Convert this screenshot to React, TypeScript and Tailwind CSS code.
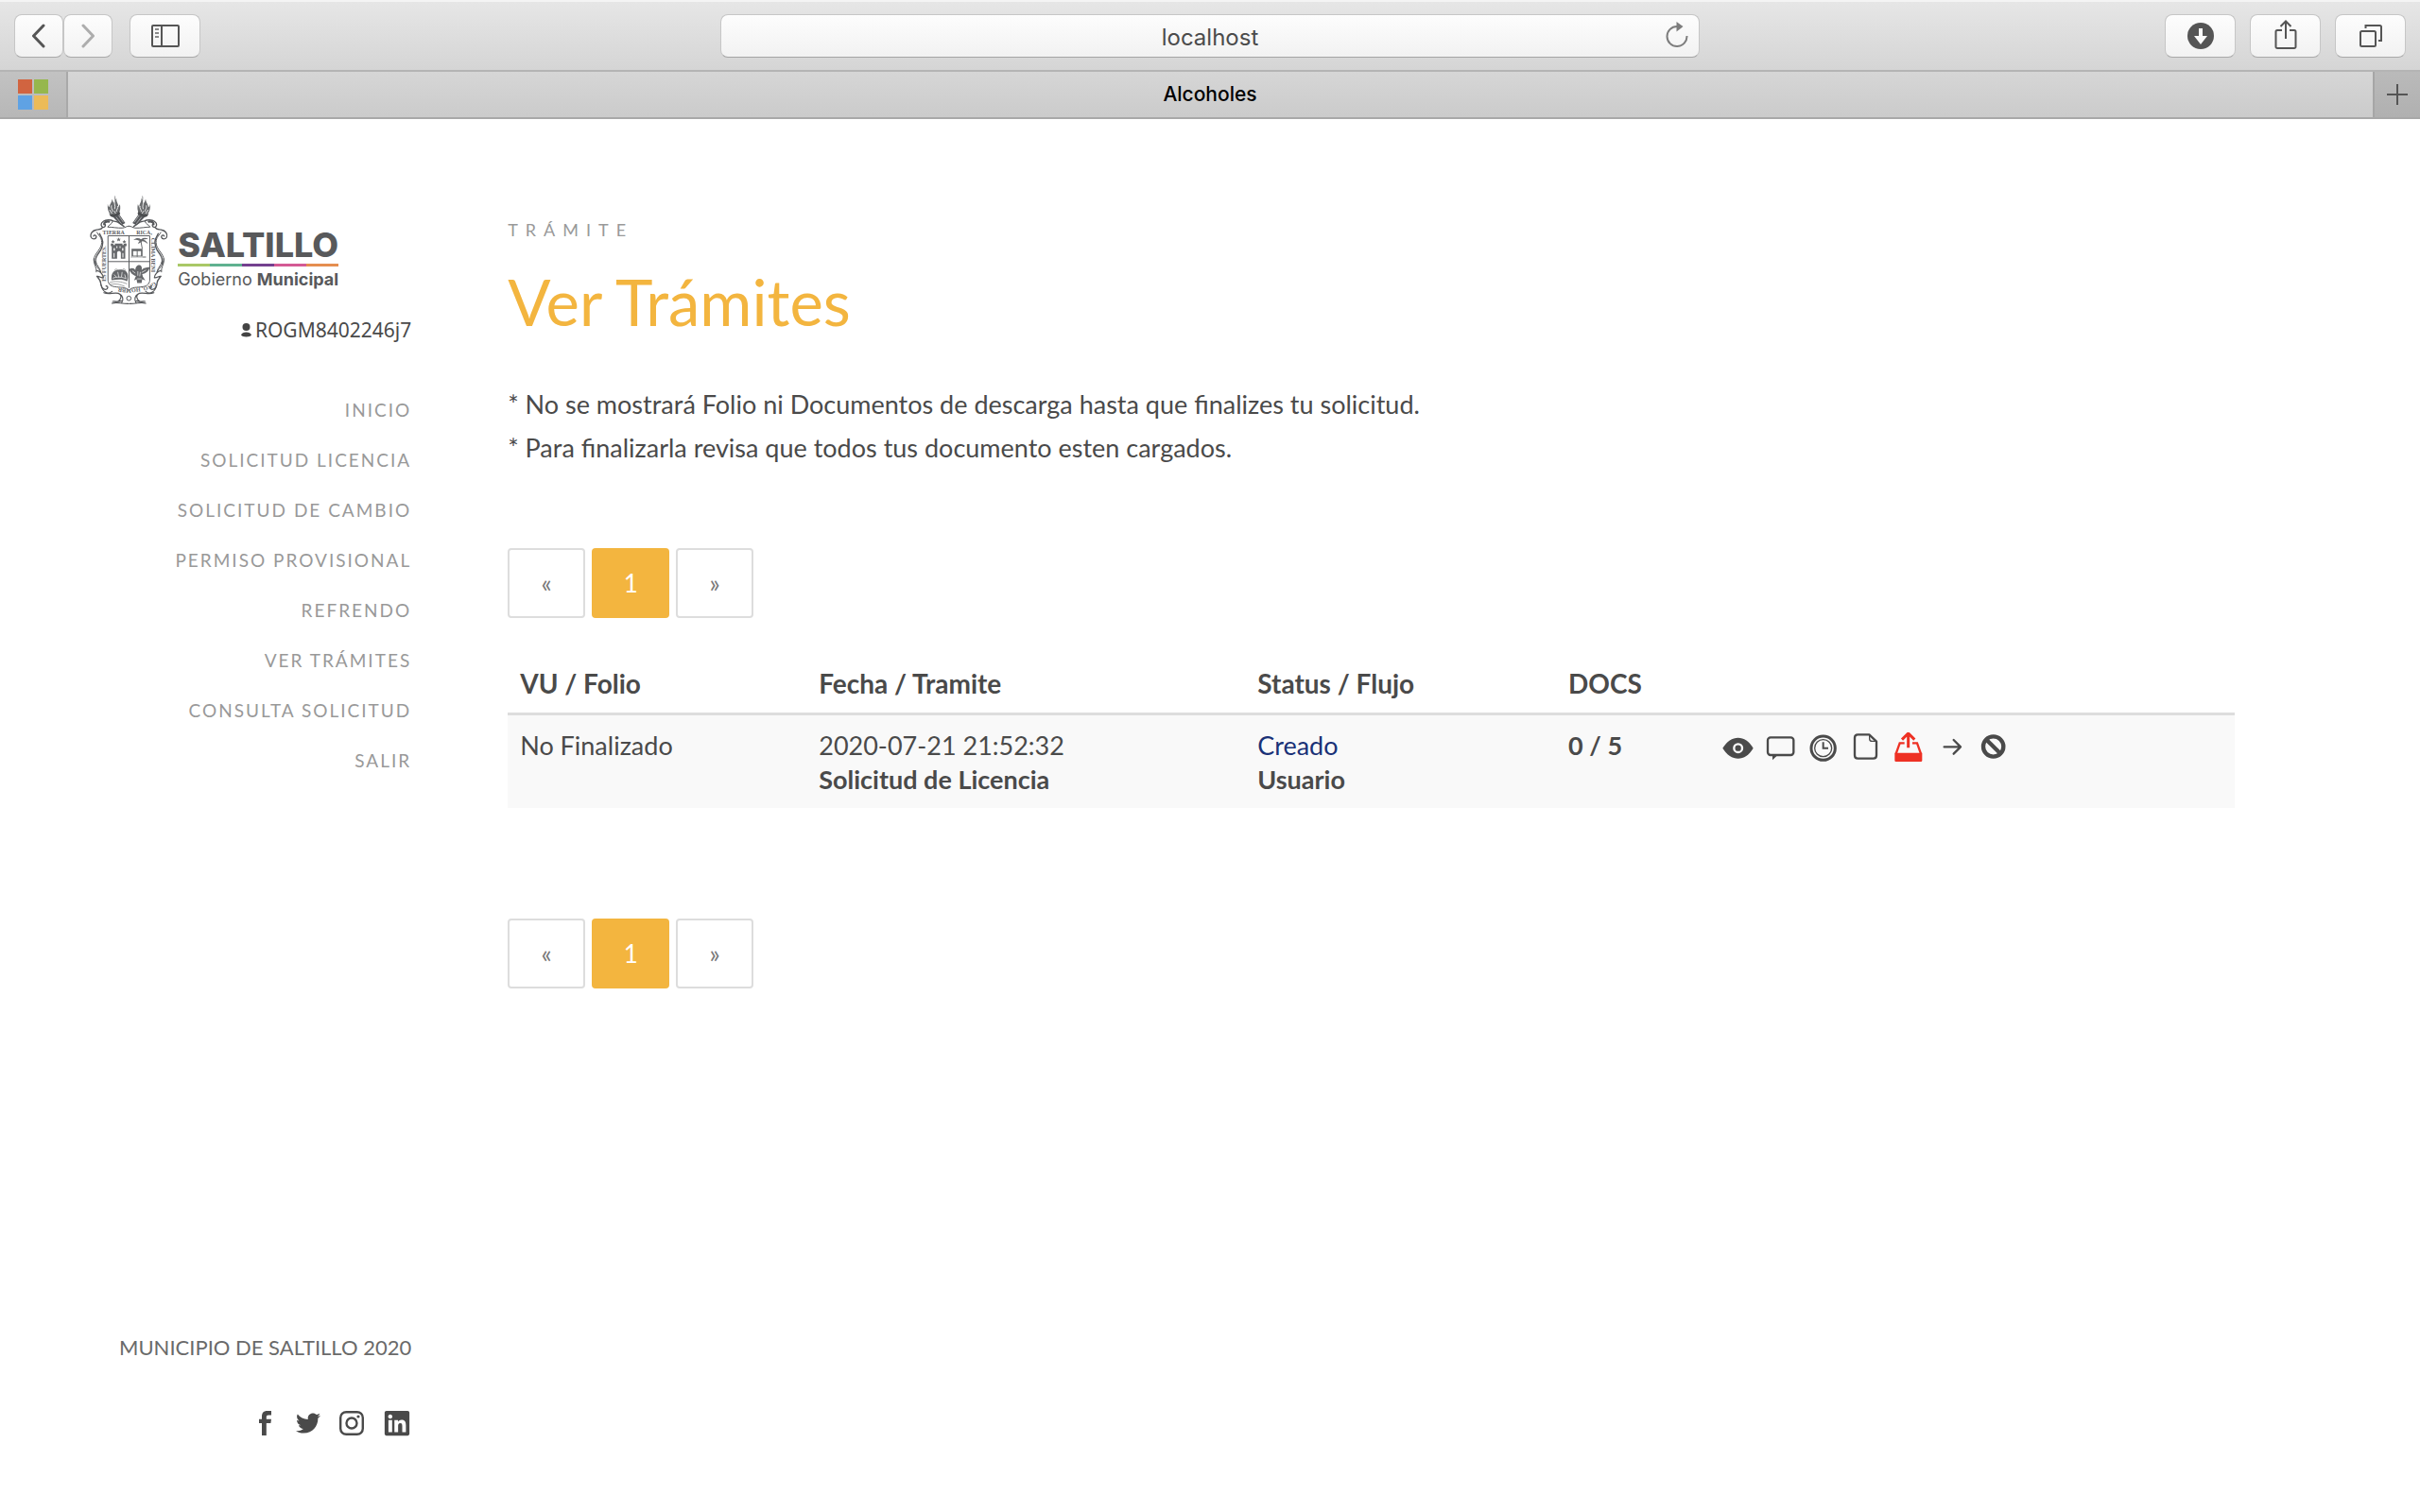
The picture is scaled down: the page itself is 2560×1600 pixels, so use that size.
import React from "react";
import { FaTwitter, FaLinkedin } from "react-icons/fa";

const NAV = [
  "INICIO",
  "SOLICITUD LICENCIA",
  "SOLICITUD DE CAMBIO",
  "PERMISO PROVISIONAL",
  "REFRENDO",
  "VER TRÁMITES",
  "CONSULTA SOLICITUD",
  "SALIR",
];

function ToolButton({ label, wide, children }: { label: string; wide?: boolean; children: React.ReactNode }) {
  return (
    <button
      type="button"
      aria-label={label}
      className={
        "flex h-[46px] items-center justify-center rounded-lg border border-[#c6c6c6] border-b-[#a9a9a9] bg-linear-to-b from-[#fdfdfd] to-[#f2f2f2] text-[#555] " +
        (wide ? "w-[75px]" : "w-[52px]")
      }
    >
      {children}
    </button>
  );
}

function BrowserChrome() {
  return (
    <header>
      <div className="flex h-[76px] items-center border-t-2 border-b-2 border-t-[#f4f4f4] border-b-[#b4b4b4] bg-linear-to-b from-[#e6e6e6] to-[#d5d5d5] px-[15px]">
        <div className="flex flex-1 items-center">
          <ToolButton label="Atrás">
            <svg width="16" height="26" viewBox="0 0 16 26" fill="none" stroke="#555" strokeWidth="3" strokeLinecap="round" strokeLinejoin="round">
              <path d="M13 2 2.500 13 13 24" />
            </svg>
          </ToolButton>
          <ToolButton label="Adelante">
            <svg width="16" height="26" viewBox="0 0 16 26" fill="none" stroke="#adadad" strokeWidth="3" strokeLinecap="round" strokeLinejoin="round">
              <path d="M3 2 13.500 13 3 24" />
            </svg>
          </ToolButton>
          <div className="ml-[18px]">
            <ToolButton label="Mostrar barra lateral" wide>
              <svg width="30" height="24" viewBox="0 0 30 24" fill="none" stroke="#555" strokeWidth="2">
                <rect x="1" y="1" width="28" height="22" rx="1" />
                <path d="M11 1v22" />
                <path d="M4 5h4M4 9h4M4 13h4" stroke="#8a8a8a" />
              </svg>
            </ToolButton>
          </div>
        </div>
        <div className="relative flex w-[1036px]">
          <input
            aria-label="Dirección"
            defaultValue="localhost"
            className="h-[46px] w-full rounded-lg border border-[#c6c6c6] border-b-[#a4a4a4] bg-linear-to-b from-[#fdfdfd] to-[#f2f2f2] pt-0.5 text-center font-[Inter,sans-serif] text-[24px] text-[#4b4b4b]"
          />
          <button type="button" aria-label="Recargar" className="absolute top-2 right-2.5">
            <svg width="28" height="28" viewBox="0 0 28 28" fill="none" stroke="#7d7d7d" strokeWidth="2">
              <path d="M14 5A10.500 10.500 0 1 0 24.500 15" />
              <path d="M13.500 0 20.500 5 13.500 10.500z" fill="#7d7d7d" stroke="none" />
            </svg>
          </button>
        </div>
        <div className="flex flex-1 items-center justify-end gap-[15px]">
          <ToolButton label="Descargas" wide>
            <svg width="28" height="28" viewBox="0 0 28 28">
              <circle cx="14" cy="14" r="14" fill="#555" />
              <path d="M12 6h4v8h5l-7 9-7-9h5z" fill="#fafafa" />
            </svg>
          </ToolButton>
          <ToolButton label="Compartir" wide>
            <svg width="24" height="32" viewBox="0 0 24 32" fill="none" stroke="#555" strokeWidth="2" className="mb-1">
              <path d="M8 12H3a1.500 1.500 0 0 0-1.500 1.500v16A1.500 1.500 0 0 0 3 31h18a1.500 1.500 0 0 0 1.500-1.500v-16A1.500 1.500 0 0 0 21 12h-5M12 21V3M6.500 8 12 2.500 17.500 8" />
            </svg>
          </ToolButton>
          <ToolButton label="Mostrar todas las pestañas" wide>
            <svg width="26" height="26" viewBox="0 0 26 26" fill="none" stroke="#555" strokeWidth="2">
              <rect x="2" y="8" width="16" height="16" rx="1.500" />
              <path d="M7.500 5V2h15a1.500 1.500 0 0 1 1.500 1.500V18h-3" />
            </svg>
          </ToolButton>
        </div>
      </div>
      <div className="flex h-[50px] border-b-2 border-[#a8a8a8] font-[Inter,sans-serif]">
        <button type="button" aria-label="Pestaña fijada" className="flex w-[72px] items-center justify-center border-r-2 border-[#a9a9a9] bg-linear-to-b from-[#c2c2c2] to-[#b7b7b7]">
          <svg width="32" height="32" viewBox="0 0 32 32">
            <path fill="#d16440" d="M0 0h15v15H0z" />
            <path fill="#96b74d" d="M17 0h15v15H17z" />
            <path fill="#5fa2e4" d="M0 17h15v15H0z" />
            <path fill="#ecbb58" d="M17 17h15v15H17z" />
          </svg>
        </button>
        <button type="button" className="flex-1 bg-linear-to-b from-[#d6d6d6] to-[#cbcbcb] pr-[22px] text-[21px] font-medium text-black">
          Alcoholes
        </button>
        <button type="button" aria-label="Nueva pestaña" className="flex w-[50px] items-center justify-center border-l-2 border-[#a6a6a6] bg-linear-to-b from-[#bababa] to-[#b0b0b0]">
          <svg width="22" height="22" viewBox="0 0 22 22" stroke="#555" strokeWidth="2">
            <path d="M11 0v22M0 11h22" />
          </svg>
        </button>
      </div>
    </header>
  );
}

function Torch() {
  return (
    <g>
      <path d="M126 48c-4 10 2 16-5 24-3-4-2-8-5-12 0 10-8 16-9 26-4-2-3-8-5-10-1 14 1 24 8 31 8 6 20 5 27-2 6-8 6-18 4-28-3 2-2 7-5 9 1-12-7-15-6-28-4 2-3 6-4 8 0-8 2-12 0-18z" fill="#6a6c6e" />
      <path d="M124 66c-2 12 4 14 0 26M114 80c-2 8 2 12 5 20M134 82c2 8-4 10-4 18M124 98c0 4 2 6 4 8M108 94l8 12" stroke="#fff" strokeWidth="2.500" fill="none" />
      <path d="M106 104c8 9 26 7 32-6l4 8c-6 12-24 16-32 8z" fill="#4a4c4e" />
      <path d="M120 118l18-10 20 28-13 8z" fill="#54565a" />
      <path d="M129 117l17 22M137 112l15 22" stroke="#fff" strokeWidth="1.500" />
    </g>
  );
}

function Scroll() {
  return (
    <g fill="none" stroke="#55575a" strokeLinecap="round">
      <path d="M154 147c-10-6-16-16-34-17-8-5-24-5-32 1-10 6-8 18 0 19 8 0 9-9 3-11" strokeWidth="4" />
      <path d="M118 131c-2 10-12 10-16 18 14 0 30 4 48 3 8-1 12-6 19-6" strokeWidth="3" />
      <path d="M106 132c-8-2-16 3-15 8" strokeWidth="7" />
      <path d="M86 150c-4 9-14 6-20 8-14 2-20 14-17 23 3 8 15 8 17 0 0-7-7-8-9-3" strokeWidth="4" />
      <path d="M68 166c4 10 15 14 15 32 0 22-24 34-25 56 0 16 10 24 8 38" strokeWidth="3" />
      <path d="M76 170c12 20 14 32 4 52-10 14-20 26-16 44" strokeWidth="4" />
      <path d="M58 250c0 18 14 28 22 42M64 258c2 14 14 20 16 34" strokeWidth="3" />
      <path d="M68 288c10 2 20 12 20 22-8 2-14-6-20-4 4 6 12 12 12 22 0 10 6 20 16 20 8-1 8-12 1-11" strokeWidth="4" />
      <path d="M82 334c2 20 20 32 34 20M90 358c16 8 30-2 46 2 14 6 8 22-2 26M116 392c14-6 30 2 52 1M140 362c10 4 14 20 6 29M118 386c10-2 18 4 28-2" strokeWidth="3.500" />
    </g>
  );
}

function Crest() {
  return (
    <svg width="83" height="117" viewBox="46 46 248 352" aria-label="Escudo de Saltillo" role="img">
      <Torch />
      <Scroll />
      <g transform="translate(339 0) scale(-1 1)">
        <Torch />
        <Scroll />
      </g>
      <g fill="none" stroke="#5a5c5f" strokeWidth="3">
        <path d="M103 177h133v140c0 12-8 20-22 22-18 3-36 0-44 12-10-12-28-9-46-12-14-2-21-10-21-22z" />
        <path d="M170 177v166M103 259h133" />
      </g>
      <circle cx="169.500" cy="376" r="7" fill="none" stroke="#55575a" strokeWidth="3" />
      <g fill="#66686b">
        <path d="M137 182l2 5h5l-4 3 2 5-5-3-5 3 2-5-4-3h5zM119 190l2 4h4l-3 3 1 4-4-2-4 2 1-4-3-3h4zM155 190l2 4h4l-3 3 1 4-4-2-4 2 1-4-3-3h4z" />
        <path fillRule="evenodd" d="M115 250v-40h-3v-8h8v4h5v-4h24v4h4v-4h9v8h-4v40h-14v-18c0-8-12-8-12 0v18zM121 216v8h4v-8zM148 216v8h4v-8zM130 210v6h3v-6zM140 210v6h3v-6zM121 232v14h3v-14zM149 232v14h3v-14z" />
        <path d="M184 190c10-8 18-6 24-2 8-5 16-6 24 0-8-1-13 0-17 2 8 2 13 6 15 13-6-5-11-8-18-9-4 4-8 6-14 8 3-4 4-6 6-9-6-2-12-4-20-3z" />
        <path fillRule="evenodd" d="M178 218h35v27h-35zM183 226h25v14h-25zM176 243h48v3h-48z" />
        <path d="M208 196l4 22M196 222v22" stroke="#66686b" strokeWidth="3" />
        <path d="M120 292c6-10 34-10 40-2 8 6 8 22 4 32-14-8-30-6-50-4 0-12 0-20 6-26z" />
        <path d="M170 283c10-5 16-4 20 3 1-12 6-16 12-16 8 0 10 8 8 17 6-9 14-9 26-10-3 12-12 20-24 22l2 8 8 12-10-4-2 12h-14l-2-12-8 4 6-14c-10-2-19-12-22-22z" />
      </g>
      <g fill="none" stroke="#fff" strokeWidth="2">
        <path d="M122 300l8 8M134 292l4 18M148 292l-2 16M156 300l4 12M118 312c14-6 30-4 44 2M180 288l10 8M224 286l-14 8M198 290v14M206 292l-2 14M196 314h14" />
      </g>
      <g fill="none" stroke="#76787a" strokeWidth="2">
        <path d="M108 326c18-6 36-4 56 4M110 332c18-4 34 0 46 6M124 286c2-4 8-4 10 0M150 284c4-4 8 0 8 4" />
      </g>
      <g fill="#5a5c5f" className="font-[Liberation_Serif,serif] text-[18px] font-bold">
        <text x="86" y="173">TIERRA</text>
        <text x="193" y="173">RICA,</text>
        <text transform="translate(97 322) rotate(-90)">ES FUERTES.</text>
        <text transform="translate(242 184) rotate(90)">CLIMA BENI</text>
        <path id="motto" d="M250 322c-16 20-52 20-80 24-30-2-58-4-74-20" fill="none" />
        <text>
          <textPath href="#motto">GNO, HOMBR</textPath>
        </text>
      </g>
    </svg>
  );
}

function Logo() {
  return (
    <a href="#inicio" aria-label="Saltillo Gobierno Municipal" className="flex items-center gap-2.5 text-[#58595b]">
      <Crest />
      <span className="flex flex-col pt-[22px] font-[Inter,sans-serif]">
        <span className="text-[36px] leading-9 font-extrabold">SALTILLO</span>
        <span className="mt-0.5 flex h-[3px]">
          <span className="flex-1 bg-[#a9c867]" />
          <span className="flex-1 bg-[#5fb190]" />
          <span className="flex-1 bg-[#74408f]" />
          <span className="flex-1 bg-[#d45a94]" />
          <span className="flex-1 bg-[#e58e50]" />
        </span>
        <span className="text-[18px] leading-7">
          Gobierno <b className="font-bold">Municipal</b>
        </span>
      </span>
    </a>
  );
}

function Sidebar() {
  return (
    <aside className="flex w-[17%] flex-col items-end pt-20 pb-[79px]">
      <div className="mb-2.5 pr-[77px]">
        <Logo />
      </div>
      <p className="flex items-center gap-1 font-[Noto_Sans,sans-serif] text-[21px] leading-8 text-[#4a4a4a]">
        <svg width="11" height="15" viewBox="0 0 11 15" fill="#444">
          <circle cx="5.500" cy="4" r="4" />
          <path d="M0 12.500C1 8.500 10 8.500 11 12.500 10 15 1 15 0 12.500z" />
        </svg>
        ROGM8402246j7
      </p>
      <nav className="mt-[42px]">
        <ul className="flex flex-col items-end">
          {NAV.map((item) => (
            <li key={item} className="h-[53px]">
              <a href="#menu" className="text-[19px] leading-[53px] tracking-[2px] text-[#999]">
                {item}
              </a>
            </li>
          ))}
        </ul>
      </nav>
      <footer className="mt-auto flex flex-col items-end">
        <p className="text-[22px] leading-8 text-[#6a6a6a]">MUNICIPIO DE SALTILLO 2020</p>
        <div className="mt-[49px] flex items-center gap-5 text-[#4a4a4a]">
          <a href="#facebook" aria-label="Facebook">
            <svg width="26" height="26" viewBox="0 0 26 26" fill="#4a4a4a">
              <path d="M10 26V13H7V8.700h3V6c0-4 2-6 5.500-6H20v4.500h-3c-1.800 0-2.200.8-2.200 2v2.200H20L19.400 13h-4.600v13z" />
            </svg>
          </a>
          <a href="#twitter" aria-label="Twitter"><FaTwitter size={26} /></a>
          <a href="#instagram" aria-label="Instagram">
            <svg width="26" height="26" viewBox="0 0 26 26" fill="none" stroke="#4a4a4a">
              <rect x="1.200" y="1.200" width="23.600" height="23.600" rx="6" strokeWidth="2.400" />
              <circle cx="13" cy="13" r="5.500" strokeWidth="2.400" />
              <circle cx="20" cy="6" r="1.600" fill="#4a4a4a" stroke="none" />
            </svg>
          </a>
          <a href="#linkedin" aria-label="LinkedIn"><FaLinkedin size={30} /></a>
        </div>
      </footer>
    </aside>
  );
}

function Pagination() {
  return (
    <nav aria-label="Paginación" className="flex gap-[7px] text-[26px] text-[#777]">
      <button type="button" className="h-[74px] w-[82px] rounded border-2 border-[#ddd]">«</button>
      <button type="button" className="h-[74px] w-[82px] rounded bg-[#f3b53f] text-white">1</button>
      <button type="button" className="h-[74px] w-[82px] rounded border-2 border-[#ddd]">»</button>
    </nav>
  );
}

function ActionIcon({ label, box, children }: { label: string; box: string; children: React.ReactNode }) {
  return (
    <button type="button" aria-label={label}>
      <svg width="33" height="33" viewBox={box} fill="none" stroke="#4a4a4a">
        {children}
      </svg>
    </button>
  );
}

function Actions() {
  return (
    <div className="flex gap-3">
      <ActionIcon label="Ver" box="67 75 99 99">
        <path d="M68 125c26-44 72-44 97 0-25 44-71 44-97 0z" fill="#4a4a4a" stroke="none" />
        <circle cx="117" cy="125" r="13" stroke="#f9f9f9" strokeWidth="7" />
      </ActionIcon>
      <ActionIcon label="Comentarios" box="202 75 99 99">
        <rect x="211" y="91" width="82" height="56" rx="9" strokeWidth="7" />
        <path d="M226 148v15l16-15z" fill="#4a4a4a" stroke="none" />
      </ActionIcon>
      <ActionIcon label="Historial" box="337 75 99 99">
        <circle cx="387" cy="125" r="38" strokeWidth="9" />
        <circle cx="387" cy="125" r="27" strokeWidth="4" />
        <path d="M387 106v19h16" strokeWidth="6" />
      </ActionIcon>
      <ActionIcon label="Documento" box="472 75 99 99">
        <path d="M497 82h36l23 22v44q0 10-10 10h-49q-10 0-10-10V92q0-10 10-10z" strokeWidth="7" strokeLinejoin="round" />
        <path d="M534 82v13q0 8 8 8h14" strokeWidth="4" />
      </ActionIcon>
      <ActionIcon label="Subir documentos" box="607 75 99 99">
        <g stroke="#ee3124">
          <path d="M614 140h87v24q0 4-4 4h-79q-4 0-4-4z" fill="#ee3124" stroke="none" />
          <path d="M645 109h-15l-12 34M670 109h15l12 34" strokeWidth="7" />
          <path d="M657 124V80M637 98l20-20 20 20" strokeWidth="9" />
        </g>
      </ActionIcon>
      <ActionIcon label="Enviar" box="742 75 99 99">
        <path d="M771 121h52M801 99l22 22-22 22" strokeWidth="7" strokeLinecap="round" strokeLinejoin="round" />
      </ActionIcon>
      <ActionIcon label="Cancelar" box="877 75 99 99">
        <circle cx="927" cy="120" r="32" strokeWidth="13" />
        <path d="M905 98l44 44" strokeWidth="13" />
      </ActionIcon>
    </div>
  );
}

function Main() {
  return (
    <main className="ml-[102px] flex-1 pt-[101px] pr-[196px]">
      <p className="text-[18px] leading-8 tracking-[8px] text-[#999]">TRÁMITE</p>
      <h1 className="mt-5 text-[67px] leading-20 text-[#f3b53f]">Ver Trámites</h1>
      <div className="mt-[46px] text-[27px] leading-[46px]">
        <p>* No se mostrará Folio ni Documentos de descarga hasta que finalizes tu solicitud.</p>
        <p>* Para finalizarla revisa que todos tus documento esten cargados.</p>
      </div>
      <div className="mt-[83px]">
        <Pagination />
      </div>
      <table className="mt-11 w-full table-fixed text-left text-[27px] leading-9">
        <thead>
          <tr className="border-b-3 border-[#ddd] text-[28px]">
            <th className="w-[17.3%] px-[13px] pt-[7px] pb-[13px]">VU / Folio</th>
            <th className="w-[25.4%] px-[13px] pt-[7px] pb-[13px]">Fecha / Tramite</th>
            <th className="w-[18%] px-[13px] pt-[7px] pb-[13px]">Status / Flujo</th>
            <th className="w-[8.900%] px-[13px] pt-[7px] pb-[13px]">DOCS</th>
            <th aria-label="Acciones" />
          </tr>
        </thead>
        <tbody>
          <tr className="bg-[#f9f9f9] align-top">
            <td className="px-[13px] pt-3.5 pb-3">No Finalizado</td>
            <td className="px-[13px] pt-3.5 pb-3">
              2020-07-21 21:52:32
              <br />
              <b>Solicitud de Licencia</b>
            </td>
            <td className="px-[13px] pt-3.5 pb-3">
              <a href="#status" className="text-[#1a3177]">Creado</a>
              <br />
              <b>Usuario</b>
            </td>
            <td className="px-[13px] pt-3.5 pb-3 font-bold">0 / 5</td>
            <td className="px-[13px] pt-[18px] pb-3">
              <Actions />
            </td>
          </tr>
        </tbody>
      </table>
      <div className="mt-[117px]">
        <Pagination />
      </div>
    </main>
  );
}

export default function App() {
  return (
    <div className="flex min-h-screen flex-col bg-white font-[Lato,sans-serif] text-[#4a4a4a]">
      <BrowserChrome />
      <div className="flex flex-1">
        <Sidebar />
        <Main />
      </div>
    </div>
  );
}
